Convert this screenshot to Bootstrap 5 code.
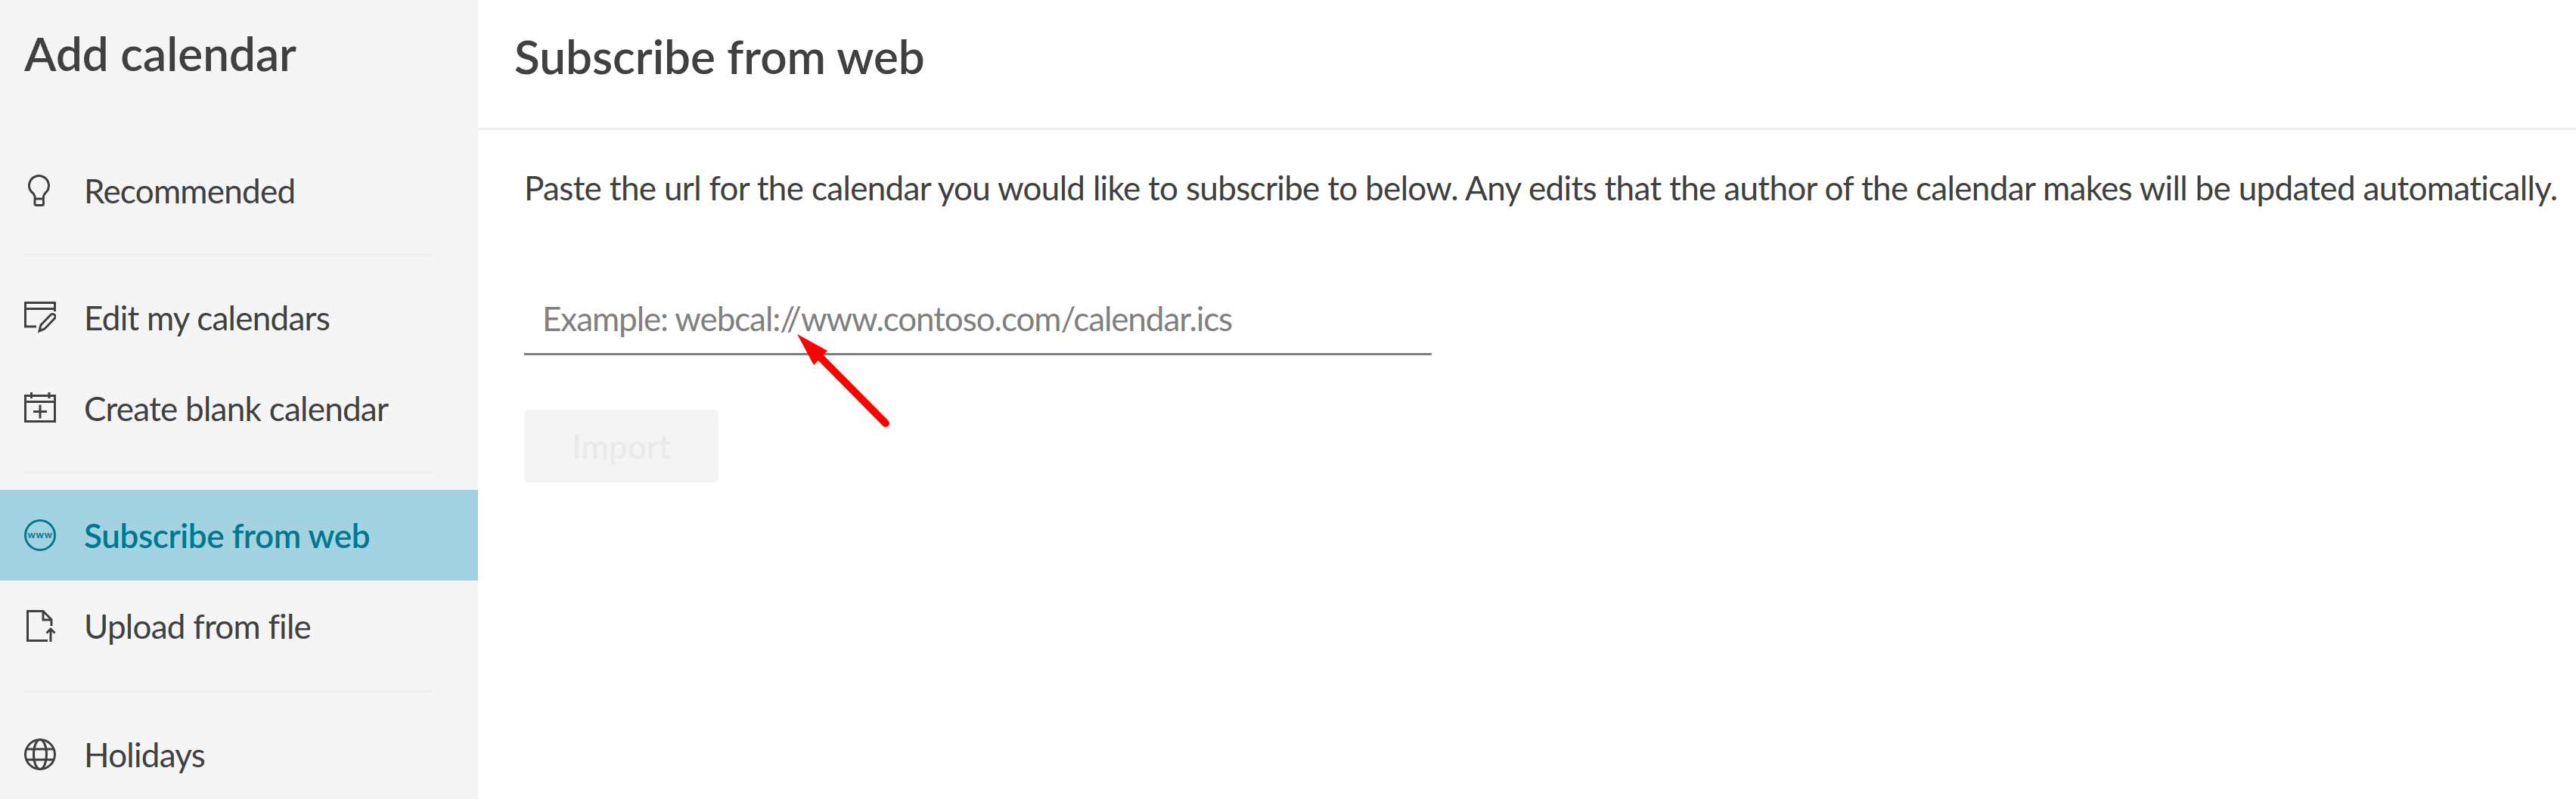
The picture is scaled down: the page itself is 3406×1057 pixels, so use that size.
<!DOCTYPE html>
<html lang="en">

<head>
  <meta charset="UTF-8">
  <meta name="viewport" content="width=device-width, initial-scale=1">
  <title>Add calendar</title>
  <link href="https://cdn.jsdelivr.net/npm/bootstrap@5.3.0/dist/css/bootstrap.min.css" rel="stylesheet">
  <style>
    html, body {
      height: 100%;
      overflow: hidden;
    }

    body {
      font-family: Lato, "Open Sans", sans-serif;
      font-size: 44px;
      color: #404040;
      background-color: #fff;
    }

    .side-panel {
      width: 632px;
      height: 1057px;
      flex-shrink: 0;
      background-color: #f5f5f5;
    }

    .side-title {
      height: 192px;
      margin: 0;
      padding: 34px 0 0 32px;
      font-size: 62px;
      font-weight: 600;
      line-height: 72px;
    }

    .side-item {
      height: 120px;
      padding: 0 0 0 32px;
      gap: 37px;
      color: #404040;
      letter-spacing: -0.75px;
    }

    .side-item.on {
      background-color: #a3d3e1;
      color: #00788f;
      font-weight: 600;
      letter-spacing: -0.4px;
    }

    .side-item svg {
      width: 42px;
      height: 42px;
      flex-shrink: 0;
      fill: none;
      stroke: currentColor;
      stroke-width: 3;
    }

    .side-line {
      height: 3px;
      width: 540px;
      margin: 24px 0 21px 32px;
      background-color: #eeeeee;
    }

    .side-line.last {
      margin: 25px 0 22px 32px;
    }

    .main-panel {
      position: relative;
    }

    .main-head {
      height: 172px;
      padding: 34px 0 0 48px;
      border-bottom: 3px solid #eeeeee;
      font-size: 62px;
      font-weight: 600;
      line-height: 80px;
    }

    .main-body {
      padding: 46px 0 0 61px;
    }

    .main-text {
      margin: 0 0 108px;
      line-height: 60px;
      white-space: nowrap;
      letter-spacing: -0.67px;
    }

    .url-box {
      width: 1200px;
      height: 84px;
      padding: 0 24px 12px;
      border: 0;
      border-bottom: 3px solid #7f7f7f;
      border-radius: 0;
      font-size: 44px;
      color: #404040;
      letter-spacing: -1.08px;
    }

    .url-box::placeholder {
      color: #808080;
      opacity: 1;
    }

    .import-btn {
      display: block;
      width: 257px;
      height: 96px;
      margin-top: 72px;
      padding: 0;
      border: 0;
      border-radius: 6px;
      font-size: 44px;
      font-weight: 600;
    }

    .import-btn:disabled {
      background-color: #f4f4f4;
      color: #eaeaea;
      opacity: 1;
    }

    .note-arrow {
      position: absolute;
      left: 0;
      top: 0;
      width: 600px;
      height: 600px;
    }
  </style>
</head>

<body>
  <div class="d-flex">
    <aside class="side-panel">
      <h1 class="side-title">Add calendar</h1>

      <a class="side-item d-flex align-items-center text-decoration-none" href="#">
        <svg viewBox="0 0 42 42"><path d="M14 32v-3c0-3-3-4.500-5.500-7.500a13 13 0 1 1 22 0c-2.500 3-5 4.500-5 7.500v3"/><rect x="14" y="32" width="11.500" height="8.500" rx="2"/></svg>
        <span>Recommended</span>
      </a>
      <div class="side-line"></div>

      <a class="side-item d-flex align-items-center text-decoration-none" href="#">
        <svg viewBox="0 0 42 42"><path d="M16 33H1.500V1.500h39V13M1.500 9.500h39"/><path d="M20 39l2-8L35 17.500a3.500 3.500 0 0 1 5 5L27 36z"/></svg>
        <span>Edit my calendars</span>
      </a>
      <a class="side-item d-flex align-items-center text-decoration-none" href="#">
        <svg viewBox="0 0 42 42"><path d="M1.500 4.500h39v34h-39zM1.500 12.500h39M9.500 0v8M33 0v8M12 25.500h18M21 16.500v18"/></svg>
        <span>Create blank calendar</span>
      </a>
      <div class="side-line"></div>

      <a class="side-item on d-flex align-items-center text-decoration-none" href="#">
        <svg viewBox="0 0 42 42"><circle cx="21" cy="21" r="19.500"/><text x="21" y="25" text-anchor="middle" font-size="13" font-weight="700" letter-spacing="0.500" fill="currentColor" stroke="none">www</text></svg>
        <span>Subscribe from web</span>
      </a>
      <a class="side-item d-flex align-items-center text-decoration-none" href="#">
        <svg viewBox="0 0 42 42"><path d="M31 40.500H4.500v-39H25l11 11v8.500M25 1.500v11.500h11M35 42V25M29.500 30.500l5.500-5.500 5.500 5.500"/></svg>
        <span>Upload from file</span>
      </a>
      <div class="side-line last"></div>

      <a class="side-item d-flex align-items-center text-decoration-none" href="#">
        <svg viewBox="0 0 42 42"><circle cx="21" cy="21" r="19.500"/><ellipse cx="21" cy="21" rx="8.500" ry="19.500"/><path d="M3 14h36M3 28h36"/></svg>
        <span>Holidays</span>
      </a>
    </aside>

    <main class="main-panel flex-grow-1">
      <div class="main-head">Subscribe from web</div>
      <div class="main-body">
        <p class="main-text">Paste the url for the calendar you would like to subscribe to below. Any edits that the author of the calendar makes will be updated automatically.</p>
        <input class="form-control url-box shadow-none" type="text" placeholder="Example: webcal://www.contoso.com/calendar.ics">
        <button class="btn import-btn" type="button" disabled>Import</button>
      </div>
      <svg class="note-arrow" viewBox="0 0 600 600">
        <path d="M539 560L453 473" stroke="#ff0000" stroke-width="10" stroke-linecap="round" fill="none"/>
        <path d="M422 442L462 464L444 483z" fill="#ff0000"/>
      </svg>
    </main>
  </div>

  <script src="https://cdn.jsdelivr.net/npm/bootstrap@5.3.0/dist/js/bootstrap.bundle.min.js"></script>
</body>
</html>
